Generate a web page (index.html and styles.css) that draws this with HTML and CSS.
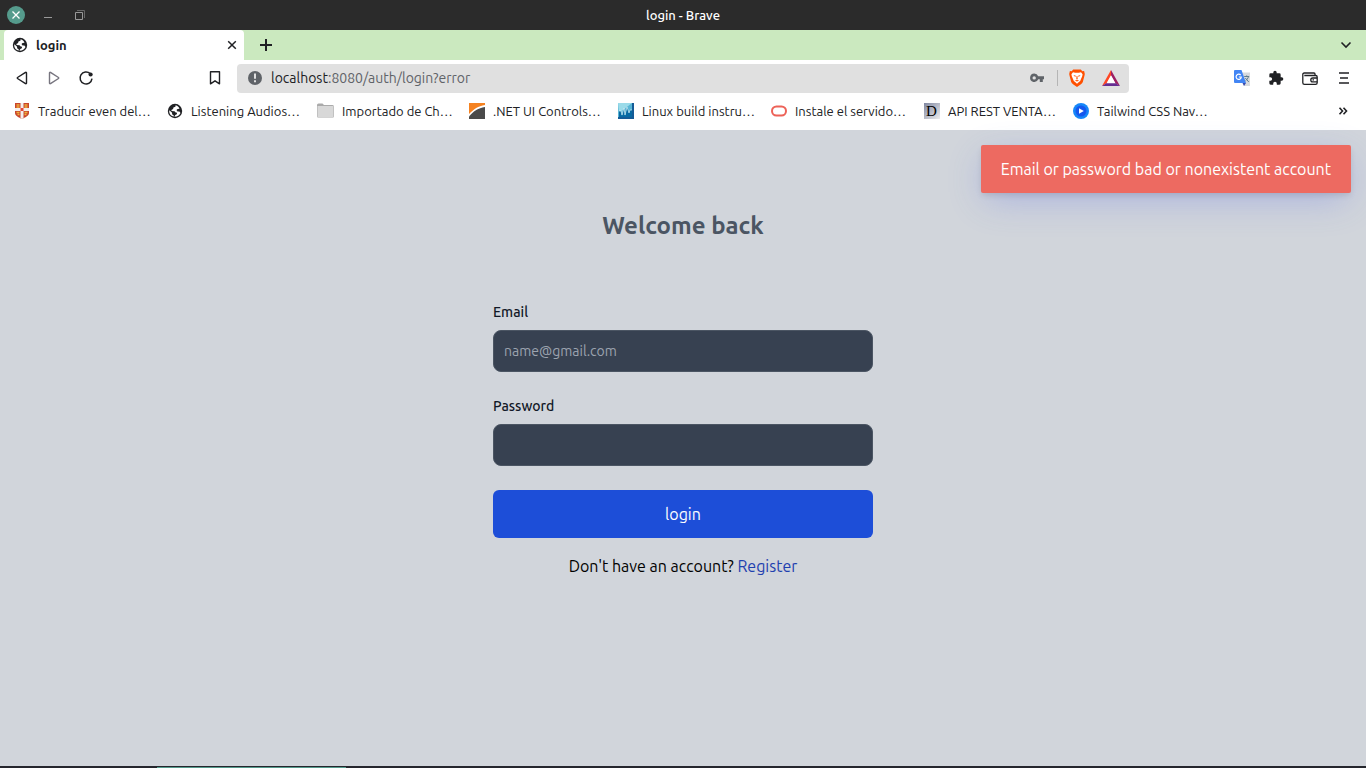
FILE: index.html
```html
<!DOCTYPE html>
<html lang="en">
<head>
<meta charset="utf-8">
<meta name="viewport" content="width=device-width, initial-scale=1">
<title>login</title>
<link rel="stylesheet" href="styles.css">
</head>
<body>
<svg class="defs" aria-hidden="true">
  <symbol id="globe" viewBox="0 0 16 16">
    <circle cx="8" cy="8" r="7.2" fill="#202124"/>
    <path d="M8.6 2.3l-.2 1.5-2 .8-.3 1.5-1.7.9.2 1.1 2.9.2 1.2 1.2 1.4.2-.3 1.5-1.5.7-.9 1.9c2.700.1 5.200-1.300 6.100-3.700l-1.100-1.500-1.900-.2-1-1.300 1.100-1.200 1.900-.2C11.900 3.900 10.500 2.600 8.600 2.300zM2.300 7.300l2.600 2.300.4 1.800 1.500 1.200v1C3.800 13.200 1.800 10.500 2.300 7.300z" fill="#fff"/>
  </symbol>
</svg>

<header class="browser">
  <div class="titlebar">
    <div class="window-buttons">
      <button class="bare" type="button" aria-label="Close window"><svg width="18" height="18" viewBox="0 0 18 18"><circle cx="9" cy="9" r="9" fill="#559b8c"/><path d="M5.500 5.500l7 7M12.500 5.500l-7 7" stroke="#fff" stroke-width="1.300"/></svg></button>
      <button class="bare" type="button" aria-label="Minimize"><svg width="10" height="10" viewBox="0 0 10 10"><path d="M1 7.500h8" stroke="#999"/></svg></button>
      <button class="bare" type="button" aria-label="Restore"><svg width="10" height="10" viewBox="0 0 10 10" fill="none"><path d="M2 .5h7.500V8" stroke="#666"/><path d="M.5 2.500h7v7h-7z" stroke="#999"/></svg></button>
    </div>
    <span class="window-title">login - Brave</span>
  </div>

  <div class="tabs">
    <div class="tab">
      <svg width="16" height="16"><use href="#globe"/></svg>
      <span class="tab-name">login</span>
      <button class="bare" type="button" aria-label="Close tab"><svg width="10" height="10" viewBox="0 0 10 10"><path d="M1.200 1.200l7.600 7.600M8.800 1.200L1.200 8.800" stroke="#202124" stroke-width="1.500"/></svg></button>
    </div>
    <button class="bare" type="button" aria-label="New tab"><svg width="12" height="12" viewBox="0 0 12 12"><path d="M6 0v12M0 6h12" stroke="#202124" stroke-width="2"/></svg></button>
    <button class="bare tab-search" type="button" aria-label="Search tabs"><svg width="12" height="12" viewBox="0 0 12 12"><path d="M1.500 3.500L6 8l4.500-4.500" stroke="#202124" stroke-width="1.600" fill="none"/></svg></button>
  </div>

  <nav class="toolbar" aria-label="Browser toolbar">
    <div class="nav-buttons">
      <button class="bare" type="button" aria-label="Back"><svg width="16" height="16" viewBox="0 0 16 16"><path d="M12.500 2.900v10.200a.6.6 0 0 1-1 .5L3.500 8.500a.6.6 0 0 1 0-1l8-5.100a.6.6 0 0 1 1 .5z" fill="none" stroke="#202124" stroke-width="1.400"/></svg></button>
      <button class="bare" type="button" aria-label="Forward"><svg width="16" height="16" viewBox="0 0 16 16"><path d="M3.500 2.900v10.200a.6.6 0 0 0 1 .5l8-5.100a.6.6 0 0 0 0-1l-8-5.100a.6.6 0 0 0-1 .5z" fill="none" stroke="#77757f" stroke-width="1.400"/></svg></button>
      <button class="bare" type="button" aria-label="Reload"><svg width="16" height="16" viewBox="0 0 16 16"><path d="M12.200 3.600A6 6 0 1 0 14 8.700" fill="none" stroke="#202124" stroke-width="1.500"/><circle cx="12.600" cy="4.500" r="2.100" fill="#202124"/></svg></button>
    </div>
    <button class="bare" type="button" aria-label="Bookmark this page"><svg width="12" height="16" viewBox="0 0 12 16"><path d="M1.500 1.700h9v12.100L6 10.800l-4.500 3z" fill="none" stroke="#202124" stroke-width="1.400" stroke-linejoin="round"/></svg></button>
    <div class="address">
      <svg width="16" height="16" viewBox="0 0 16 16"><circle cx="8" cy="8" r="7" fill="#5f6368"/><path d="M8 3.500v5.300M8 10.200v2" stroke="#e0e0e0" stroke-width="2"/></svg>
      <span class="url"><b>localhost</b>:8080/auth/login?error</span>
      <svg width="16" height="16" viewBox="0 0 16 16"><path d="M5.200 3.600a4.200 4.200 0 0 1 4 2.700H15v3h-1.200V12h-3V9.300H9.200a4.200 4.200 0 1 1-4-5.700zm0 2.600a1.700 1.700 0 1 0 0 3.400 1.700 1.700 0 0 0 0-3.400z" fill="#5f6368"/></svg>
      <span class="divider"></span>
      <svg width="18" height="18" viewBox="0 0 18 18"><path d="M5.200.5h7.600l1.500 1.700 1.800-.2.700 3-.3 1.600-1.700 6.500c-.4 1.500-3.500 3.700-5.800 4.900-2.300-1.200-5.400-3.400-5.800-4.900L1.500 6.600 1.200 5l.7-3 1.800.2z" fill="#ff5000"/><path d="M5 3.300l2.200.5h3.600l2.200-.5 1.600 2-.4 2-1.300 3-.7 1.700-1.300 1L9 14.800l-1.900-1.800-1.300-1-.7-1.700-1.300-3-.4-2z" fill="#fff"/><path d="M5.400 6l2.500.8-.7 1.100zM12.600 6l-2.500.8.7 1.100zM8.600 7h.8l.3 3-.7.700-.7-.7zM6.800 11.500L9 10.900l2.200.6L9 12.600z" fill="#ff5000"/></svg>
      <svg class="bat" width="18" height="16" viewBox="0 0 18 16"><path d="M9 0L0 16l4.700-2.700L9 5.500z" fill="#ff4724"/><path d="M9 0l9 16-4.700-2.700L9 5.500z" fill="#9e1f63"/><path d="M0 16h18l-4.700-3H4.700z" fill="#662d91"/><path d="M9 5.300l4.400 7.900H4.600z" fill="#fff"/></svg>
    </div>
    <div class="extensions">
      <button class="bare" type="button" aria-label="Translate"><svg width="16" height="16" viewBox="0 0 16 16"><path d="M7 2.500h9V16H10z" fill="#d8dadd"/><path d="M0 1a1 1 0 0 1 1-1h6.500L12 13H1a1 1 0 0 1-1-1z" fill="#4285f4"/><path d="M8.500 13H12l-2 3z" fill="#3949ab"/><path d="M6.700 5.100A2.600 2.600 0 1 0 7.300 7H4.900" fill="none" stroke="#fff" stroke-width="1.200"/><path d="M10.200 6.500h5M12.700 5.400v1.100M14.500 6.500c-.5 2-1.600 3.200-3 4.300M11.300 8l3.500 4" fill="none" stroke="#607d8b"/></svg></button>
      <button class="bare" type="button" aria-label="Extensions"><svg width="16" height="16" viewBox="0 0 24 24"><path d="M20.500 11H19V7a2 2 0 0 0-2-2h-4V3.500a2.500 2.500 0 0 0-5 0V5H4a2 2 0 0 0-2 2v3.800h1.500a2.700 2.700 0 0 1 0 5.400H2V20a2 2 0 0 0 2 2h3.800v-1.500a2.700 2.700 0 0 1 5.400 0V22H17a2 2 0 0 0 2-2v-4h1.500a2.500 2.500 0 0 0 0-5z" fill="#202124"/></svg></button>
      <button class="bare" type="button" aria-label="Wallet"><svg width="16" height="16" viewBox="0 0 16 16" fill="none" stroke="#202124" stroke-width="1.300"><path d="M13 5.500V4a1 1 0 0 0-1-1H2.300a1.500 1.500 0 0 0-1.500 1.700v8A1.700 1.700 0 0 0 2.500 14.400h11a1.700 1.700 0 0 0 1.700-1.700V7a1.500 1.500 0 0 0-1.500-1.500H2.300M15.200 8h-4.500a1.900 1.900 0 0 0 0 3.800h4.500"/><path d="M10.500 9.900H12"/></svg></button>
      <button class="bare" type="button" aria-label="Menu"><svg width="16" height="16" viewBox="0 0 16 16"><path d="M3 3h10M4 8h8M3 13h10" stroke="#202124" stroke-width="1.400"/></svg></button>
    </div>
  </nav>

  <nav class="bookmarks" aria-label="Bookmarks">
    <a href="#"><svg width="16" height="16" viewBox="0 0 16 16"><path d="M1 0h14v10c0 3-4 4.500-7 6-3-1.500-7-3-7-6z" fill="#c8452d"/><path d="M2.500 2h3M10.500 2h3M2.500 4h3M10.500 4h3M2.500 9.500h3M10.500 9.500h3M3.500 11.500h2M10.500 11.500h2" stroke="#eeb13c" stroke-width="1.300"/><path d="M6.500 0h3v5H15v3H9.500v7.300L8 16l-1.500-.7V8H1V5h5.500z" fill="#f4eeee"/><path d="M6.500 5h3v3h-3z" fill="#e54636"/></svg><span class="name name-long">Traducir even del…</span></a>
    <a href="#"><svg width="16" height="16"><use href="#globe"/></svg><span class="name name-mid">Listening Audios…</span></a>
    <a href="#"><svg width="16" height="16" viewBox="0 0 16 16" overflow="visible"><path d="M-1 2Q-1 .5.500.5h4L6 2h8.500Q16 2 16 3.500v10q0 1-1 1H0q-1 0-1-1z" fill="#aaa"/><path d="M-.5 3h16v11h-16z" fill="#d8d8d8"/></svg><span class="name name-mid">Importado de Ch…</span></a>
    <a href="#"><svg width="16" height="16" viewBox="0 0 16 16"><path d="M0 0h16v2C9 3 5 6 0 11z" fill="#f58220"/><path d="M0 16v-2.500C5 8 9 5 16 4v12z" fill="#4a4a4a"/></svg><span class="name name-short">.NET UI Controls…</span></a>
    <a href="#"><svg width="16" height="16" viewBox="0 0 16 16"><path d="M0 0h16v16H0z" fill="#155b96"/><path d="M0 0h14v14H0z" fill="#58b5d5"/><path d="M0 0h14L1 10z" fill="#9bdbe9"/><path d="M1 8h2l1 5 2-8 1 8 2-9 2 6 1-3h2V14H1z" fill="#086aa3"/><path d="M1 8h2l1 4 2-7 1 7 2-8 2 6 1-3h2" fill="none" stroke="#e4f6fa" stroke-width=".6"/></svg><span class="name name-long">Linux build instru…</span></a>
    <a href="#"><svg width="16" height="16" viewBox="0 0 16 16"><rect x="1" y="3.500" width="14" height="9" rx="4.500" fill="none" stroke="#ed6258" stroke-width="2"/></svg><span class="name name-long">Instale el servido…</span></a>
    <a href="#"><svg width="16" height="16" viewBox="0 0 16 16"><defs><linearGradient id="gray" x2="1" y2="1"><stop stop-color="#7e86a0"/><stop offset="1" stop-color="#eee"/></linearGradient></defs><path d="M0 0h16v16H0z" fill="url(#gray)"/><text class="letter" x="2" y="13">D</text></svg><span class="name name-short">API REST VENTA…</span></a>
    <a href="#"><svg width="16" height="16" viewBox="0 0 16 16"><circle cx="8" cy="8" r="8" fill="#1687f8"/><circle cx="8" cy="8" r="5.500" fill="#1557ee"/><path d="M6 5.200v5.600L10.800 8z" fill="#fff"/></svg><span class="name">Tailwind CSS Nav…</span></a>
    <button class="bare overflow" type="button" aria-label="More bookmarks"><svg width="10" height="10" viewBox="0 0 10 10"><path d="M1.500 1.800L4.500 5l-3 3.200M5.500 1.800L8.500 5l-3 3.200" fill="none" stroke="#202124" stroke-width="1.600"/></svg></button>
  </nav>
</header>

<main class="page">
  <div class="toast" role="alert">Email or password bad or nonexistent account</div>
  <h1>Welcome back</h1>
  <form class="login">
    <div class="field">
      <label for="email">Email</label>
      <input id="email" type="email" placeholder="name@gmail.com">
    </div>
    <div class="field">
      <label for="password">Password</label>
      <input id="password" type="password">
    </div>
    <button class="submit" type="button">login</button>
  </form>
  <p class="signup">Don't have an account? <a href="#">Register</a></p>
</main>

<footer class="panel"><span class="panel-active"></span></footer>
</body>
</html>
```
FILE: styles.css
```css
* { box-sizing: border-box; }

body {
  margin: 0;
  min-height: 100vh;
  display: flex;
  flex-direction: column;
  font-family: Ubuntu, "Noto Sans", sans-serif;
  color: #202124;
  background: #d1d5db;
}

svg { display: block; flex: none; }
.defs { position: absolute; width: 0; height: 0; }

.bare {
  display: flex;
  padding: 0;
  border: 0;
  background: none;
}

.browser { background: #fff; }

.titlebar {
  display: grid;
  grid-template-columns: 1fr auto 1fr;
  align-items: center;
  height: 30px;
  padding: 0 7px;
  background: #2b2b2b;
}
.window-buttons { display: flex; align-items: center; gap: 18px; }
.window-buttons .bare:nth-child(2) { margin-right: 4px; }
.window-title { color: #fff; font-size: 13px; font-weight: 500; }

.tabs {
  display: flex;
  align-items: center;
  gap: 16px;
  height: 30px;
  padding: 0 14px 0 4px;
  background: #cbe9bf;
}
.tab {
  display: flex;
  align-items: center;
  gap: 8px;
  width: 240px;
  height: 30px;
  padding: 0 7px 0 8px;
  border-radius: 4px 4px 0 0;
  background: #fff;
}
.tab-name { flex: 1; font-size: 13px; font-weight: 600; }
.tab-search { margin-left: auto; }

.toolbar {
  display: flex;
  align-items: center;
  gap: 16px;
  height: 36px;
  padding: 0 14px;
}
.nav-buttons { display: flex; gap: 16px; margin-right: 99px; }
.address {
  flex: 1;
  display: flex;
  align-items: center;
  gap: 8px;
  height: 29px;
  padding: 0 9px 0 10px;
  border-radius: 4px;
  background: #e0e0e0;
}
.url { flex: 1; font-size: 14px; color: #5f6368; }
.url b { font-weight: 400; color: #202124; }
.divider { width: 1px; height: 16px; margin: 0 2px 0 4px; background: #b5b5b5; }
.bat { margin-left: 8px; }
.extensions { display: flex; gap: 18px; margin-left: 89px; }

.bookmarks {
  display: flex;
  align-items: center;
  gap: 16px;
  height: 34px;
  padding: 0 18px 4px 14px;
}
.bookmarks a {
  display: flex;
  align-items: center;
  gap: 8px;
  color: #202124;
  text-decoration: none;
}
.name { font-size: 13px; white-space: nowrap; }
.name-long { width: 113px; }
.name-mid { width: 111px; }
.name-short { width: 109px; }
.letter { font: 15px "Liberation Serif", serif; }
.overflow { margin-left: auto; }

.page {
  position: relative;
  flex: 1;
  display: flex;
  flex-direction: column;
  align-items: center;
  padding: 80px 16px 24px;
  line-height: 24px;
}
.toast {
  position: absolute;
  top: 15px;
  right: 15px;
  padding: 12px 20px;
  border-radius: 2px;
  font-size: 16px;
  color: #fff;
  background: #ed6a61;
  box-shadow: 0 3px 6px -1px rgba(0, 0, 0, .12), 0 10px 36px -4px rgba(77, 96, 232, .3);
}
h1 {
  margin: 0 0 60px;
  font-size: 24px;
  line-height: 32px;
  font-weight: 700;
  color: #4b5563;
}
.login {
  display: flex;
  flex-direction: column;
  gap: 24px;
  width: 100%;
  max-width: 380px;
}
.field { display: flex; flex-direction: column; gap: 8px; }
label { font-size: 14px; line-height: 20px; font-weight: 500; color: #111827; }
input {
  width: 100%;
  height: 42px;
  padding: 10px;
  border: 1px solid #4b5563;
  border-radius: 8px;
  font: inherit;
  font-size: 14px;
  color: #fff;
  background: #374151;
}
input::placeholder { color: #9ca3af; }
.submit {
  padding: 12px;
  border: 0;
  border-radius: 6px;
  font: inherit;
  font-size: 16px;
  line-height: 24px;
  color: #fff;
  background: #1d4ed8;
}
.signup { margin: 16px 0 0; font-size: 16px; color: #000; }
.signup a { color: #1e40af; text-decoration: none; }

.panel { height: 2px; padding: 1px 0 0 157px; background: #25262d; }
.panel-active { display: block; width: 189px; height: 1px; background: #559b8c; }
```
